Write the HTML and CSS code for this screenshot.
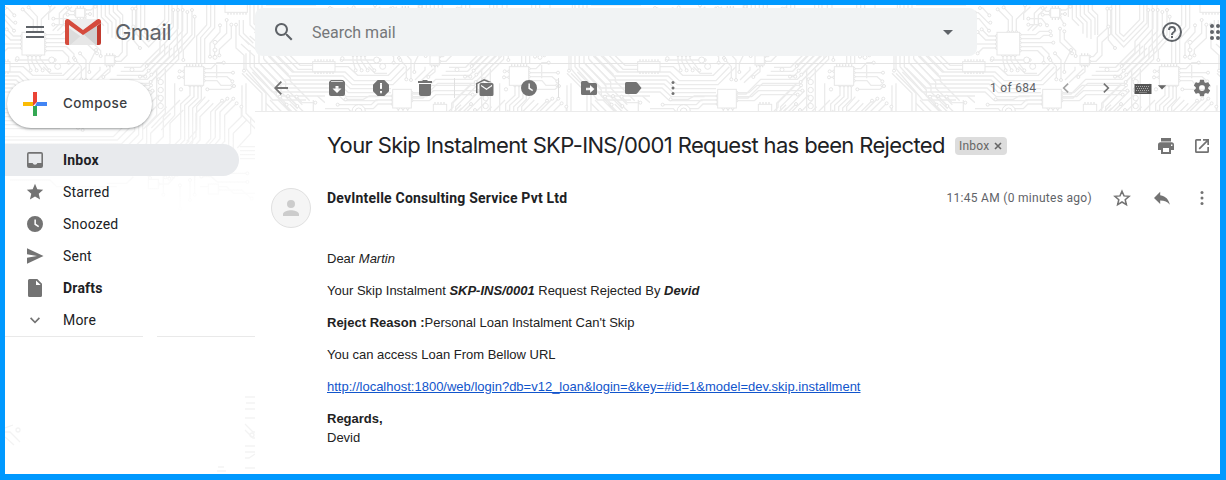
FILE: index.html
```html
<!DOCTYPE html>
<html lang="en">
<head>
<meta charset="utf-8">
<title>Gmail</title>
<link rel="stylesheet" href="styles.css">
</head>
<body>
<svg class="defs" aria-hidden="true">
  <symbol id="i-menu" viewBox="0 0 24 24"><path d="M3 6h18v2H3zM3 11h18v2H3zM3 16h18v2H3z"/></symbol>
  <symbol id="i-search" viewBox="0 0 24 24"><path d="M15.5 14h-.8l-.3-.3A6.5 6.5 0 1 0 13.7 14.4l.3.3v.8l5 5 1.5-1.5zm-6 0a4.500 4.500 0 1 1 0-9 4.500 4.500 0 0 1 0 9z"/></symbol>
  <symbol id="i-drop" viewBox="0 0 24 24"><path d="M7 10l5 5 5-5z"/></symbol>
  <symbol id="i-help" viewBox="0 0 24 24"><path d="M11 18h2v-2h-2zM12 2a10 10 0 1 0 0 20 10 10 0 0 0 0-20zm0 18a8 8 0 1 1 0-16 8 8 0 0 1 0 16zm0-14a4 4 0 0 0-4 4h2a2 2 0 1 1 4 0c0 2-3 1.750-3 5h2c0-2.250 3-2.500 3-5a4 4 0 0 0-4-4z"/></symbol>
  <symbol id="i-apps" viewBox="0 0 24 24"><g><circle cx="6" cy="6" r="2"/><circle cx="12" cy="6" r="2"/><circle cx="18" cy="6" r="2"/><circle cx="6" cy="12" r="2"/><circle cx="12" cy="12" r="2"/><circle cx="18" cy="12" r="2"/><circle cx="6" cy="18" r="2"/><circle cx="12" cy="18" r="2"/><circle cx="18" cy="18" r="2"/></g></symbol>
  <symbol id="i-back" viewBox="0 0 20 20"><path d="M17 9.100H6.300l4.700-4.800L9.700 3 3 10l6.700 7 1.300-1.300-4.700-4.800H17z"/></symbol>
  <symbol id="i-archive" viewBox="0 0 20 20"><path fill-rule="evenodd" d="M4 2h12l2 2v12a2 2 0 0 1-2 2H4a2 2 0 0 1-2-2V4zM4.300 3.300L3.800 4h12.400l-.5-.7zM8.500 8v2.500h-3L10 15l4.500-4.500h-3V8z"/></symbol>
  <symbol id="i-spam" viewBox="0 0 20 20"><path fill-rule="evenodd" d="M6.700 2h6.600L18 6.700v6.600L13.300 18H6.700L2 13.300V6.700zM9 5v6h2V5zM9 13v2.200h2V13z"/></symbol>
  <symbol id="i-trash" viewBox="0 0 20 20"><path d="M4 6h12v10a2 2 0 0 1-2 2H6a2 2 0 0 1-2-2zM3 3h4l1-1h4l1 1h4v2H3z"/></symbol>
  <symbol id="i-unread" viewBox="0 0 20 20"><path fill-rule="evenodd" d="M6 5h11a1.500 1.500 0 0 1 1.500 1.500v10A1.500 1.500 0 0 1 17 18H6a1.500 1.500 0 0 1-1.500-1.500v-10A1.500 1.500 0 0 1 6 5zm0 1.800v1.500l5.500 3.700L17 8.300V6.800l-5.500 3.700z"/><path d="M1 15V5.200L9 1l8 3.300h-4L9 2.700 2.500 6v9z"/></symbol>
  <symbol id="i-clock" viewBox="0 0 20 20"><path fill-rule="evenodd" d="M10 2a8 8 0 1 0 0 16 8 8 0 0 0 0-16zM9.400 5.500h1.500v4.300l3.200 2.100-.8 1.300-3.900-2.500z"/></symbol>
  <symbol id="i-move" viewBox="0 0 20 20"><path fill-rule="evenodd" d="M3.500 3H8l2 2h6.500A1.500 1.500 0 0 1 18 6.500v9a1.500 1.500 0 0 1-1.500 1.500h-13A1.500 1.500 0 0 1 2 15.500v-11A1.500 1.500 0 0 1 3.500 3zM11 7v2.800H7v2.500h4V15l4.500-4z"/></symbol>
  <symbol id="i-label" viewBox="0 0 20 20"><path d="M3.500 4h9.300c.6 0 1.200.3 1.500.8L18.500 10l-4.200 5.200c-.3.500-.9.800-1.500.8H3.500A1.500 1.500 0 0 1 2 14.500v-9A1.500 1.500 0 0 1 3.500 4z"/></symbol>
  <symbol id="i-more" viewBox="0 0 20 20"><circle cx="10" cy="4.500" r="1.500"/><circle cx="10" cy="10" r="1.500"/><circle cx="10" cy="15.500" r="1.500"/></symbol>
  <symbol id="i-left" viewBox="0 0 20 20"><path d="M12.700 6.200L8.800 10l3.900 3.800-1.100 1.200-5.100-5 5.100-5z"/></symbol>
  <symbol id="i-right" viewBox="0 0 20 20"><path d="M7.300 6.200l3.900 3.800-3.900 3.800L8.400 15l5.100-5-5.100-5z"/></symbol>
  <symbol id="i-keys" viewBox="0 0 18 12"><path d="M.5 1h17v10H.5z"/><path stroke="#aaa" stroke-dasharray="1 1" d="M2 3.500h14M3 5.500h12M2 7.500h14"/><path stroke="#aaa" d="M5 9.400h8" stroke-width=".6"/></symbol>
  <symbol id="i-gear" viewBox="0 0 24 24"><path d="M19.430 12.980c.04-.32.070-.64.070-.98s-.03-.66-.07-.98l2.110-1.650c.19-.15.240-.42.120-.64l-2-3.460c-.12-.22-.39-.3-.61-.22l-2.490 1c-.52-.4-1.080-.73-1.690-.98l-.38-2.650A.49.490 0 0 0 14 2h-4c-.25 0-.46.180-.49.420l-.38 2.650c-.61.250-1.170.590-1.690.980l-2.490-1c-.23-.09-.49 0-.61.220l-2 3.460c-.13.220-.07.490.120.640l2.110 1.650c-.04.320-.07.650-.07.980s.03.660.070.980l-2.110 1.650c-.19.150-.24.420-.12.640l2 3.460c.12.220.390.300.610.220l2.490-1c.52.400 1.080.730 1.690.980l.38 2.650c.03.240.240.420.490.420h4c.25 0 .46-.18.490-.42l.38-2.650c.61-.25 1.170-.59 1.690-.98l2.490 1c.23.090.490 0 .610-.22l2-3.460c.12-.22.070-.49-.12-.64zM12 15.500a3.500 3.500 0 1 1 0-7 3.500 3.500 0 0 1 0 7z"/></symbol>
  <symbol id="i-inbox" viewBox="0 0 20 20"><path fill-rule="evenodd" d="M4 2h12a2 2 0 0 1 2 2v12a2 2 0 0 1-2 2H4a2 2 0 0 1-2-2V4a2 2 0 0 1 2-2zm-.4 1.700v9.300h4a2.500 2.500 0 0 0 4.800 0h4V3.700z"/></symbol>
  <symbol id="i-star" viewBox="0 0 20 20"><path d="M10 1.800l2.300 5.500 5.900.5-4.500 3.900 1.400 5.800-5.100-3.100-5.100 3.100 1.400-5.800-4.500-3.900 5.900-.5z"/></symbol>
  <symbol id="i-send" viewBox="0 0 20 20"><path d="M2 2.200L18.500 10 2 17.800v-6L12 10 2 8.200z"/></symbol>
  <symbol id="i-file" viewBox="0 0 20 20"><path fill-rule="evenodd" d="M4.500 1h7.800L17 5.700v11.800a1.500 1.500 0 0 1-1.500 1.500h-11A1.500 1.500 0 0 1 3 17.500v-15A1.500 1.500 0 0 1 4.500 1zM11 2.500V7h4.700z"/></symbol>
  <symbol id="i-down" viewBox="0 0 20 20"><path d="M6.200 7.300l3.800 3.900 3.800-3.900L15 8.400l-5 5.100-5-5.100z"/></symbol>
  <symbol id="i-print" viewBox="0 0 20 20"><path fill-rule="evenodd" d="M5 2h10v3.500H5zM4.500 6.300h11A2.500 2.500 0 0 1 18 8.800V14h-3v4H5v-4H2V8.800a2.500 2.500 0 0 1 2.500-2.500zM7 12v4h6v-4zm8-3.500v1.400h1.400V8.500z"/></symbol>
  <symbol id="i-open" viewBox="0 0 20 20"><path d="M15.300 15.300H4.700V4.700H9V3H4.500A1.500 1.500 0 0 0 3 4.500v11A1.500 1.500 0 0 0 4.500 17h11a1.500 1.500 0 0 0 1.500-1.500V11h-1.700zM11 3v1.700h3.100l-7.500 7.500 1.200 1.200 7.500-7.500V9H17V3z"/></symbol>
  <symbol id="i-staro" viewBox="0 0 20 20"><path fill="none" stroke="currentColor" stroke-width="1.500" d="M10 3.200l2 4.700 5.100.4-3.900 3.400 1.200 5-4.400-2.700-4.400 2.700 1.200-5-3.900-3.400 5.100-.4z"/></symbol>
  <symbol id="i-reply" viewBox="0 0 20 20"><path d="M8.200 7.200V3.800L2 10l6.200 6v-3.600c4.400 0 7.400 1.300 9.600 4.300-.9-4.400-3.600-8.800-9.600-9.500z"/></symbol>
  <symbol id="i-person" viewBox="0 0 16 16"><path d="M8 8a4 4 0 1 0 0-8 4 4 0 0 0 0 8zm0 2.200c-2.800 0-8 1.300-8 4V16h16v-1.800c0-2.700-5.200-4-8-4z"/></symbol>
</svg>

<div class="frame">
  <!-- circuit board theme, drawn on a 3x grid -->
  <svg class="theme" width="1226" height="474" aria-hidden="true">
    <defs>
      <marker id="pad" viewBox="0 0 14 14" refX="7" refY="7" markerWidth="14" markerHeight="14" markerUnits="userSpaceOnUse"><circle class="pad" cx="7" cy="7" r="4.500"/></marker>
      <pattern id="board" width="975" height="780" patternUnits="userSpaceOnUse" patternTransform="scale(.33333)">
        <g class="trace">
          <path d="M410 15v88l36 38 70-72V15M422 15v86l24 24 60-62V15M434 15v84l12 10 48-50V15"/>
          <path d="M735 120l42 36v32l66 70v18l50 50M723 132l40 36v32l66 70v18l50 50M749 108l42 36v32l66 70v18l50 50M763 96l42 36v32l66 70v10l58 58"/>
          <path d="M805 168l60 60h110M817 156l60 60h98M793 180l60 60h122M781 192l60 60h134M769 204l60 60h146M757 216l60 60h158"/>
          <path d="M0 216h60l28 26h110l40-42M0 228h54l28 26h122l54-54M0 240h48l28 26h122M0 252h42l28 26h128M0 264h36l28 26h100M0 276h30l28 26h100"/>
          <path d="M258 282h30l44-44h110l90-88V15M258 294h36l44-44h110l98-98V15"/>
          <path d="M440 250l-60 60v60l-40 40H0M452 260l-60 60v60l-40 40H0M464 272l-60 60v60l-40 40H0M476 284l-60 60v60l-40 40H0M488 300l-60 60v56l-50 52M500 320l-60 60v50l-40 40M512 340l-60 60v48l-40 40"/>
          <path d="M470 206v140l-40 42M496 206v134l-42 44M524 250v96l-40 44"/>
          <path d="M620 15v60l-30 34v80M632 15v64l-30 34v76M644 15v68l-30 34v72M750 15v60l30 30M762 15v56l30 30M774 15v52l30 30M786 15v48l30 30M798 15h150"/>
          <path d="M0 350h200M0 362h200M0 374h190M0 386h180M975 340h-60l-40-40M975 352h-66l-40-40M720 440h80M720 452h80M720 464h80M720 476h80M0 440h340l30 30M0 455h330l30 30M600 560h80l20 20h80M30 540h120l20 20h180M320 550h60l20-20"/>
          <path d="M738 220l60 60v60l50 50M726 220l60 60v64l50 50M738 250v90l40 40M726 256v90l40 40"/>
          <path d="M786 120v24l80 80M798 108v24l84 84M810 108v16l84 84h81M822 120l78 76h38M750 150v50l80 88h145M738 160v46l80 94h100"/>
          <path d="M810 300l50 50v60M798 310l50 50v60M834 300l40 40v80M850 312l36 36v70M940 300v40l35 35M952 288l23 20"/>
          <path d="M30 200h40l28 26h92l36-36M130 200l20 20h36M270 240l30-30v-10M282 248l44-42M350 226h84l82-82M362 214h66l76-76M372 202h50l70-70"/>
          <path d="M360 346l24-24v-14l54-54M372 350l36-36M270 350h60M280 362h70M290 374h70l50-50M0 326h70l20 24M0 338h60"/>
          <path d="M280 15v36M292 15v42l20 20M304 15v36l20 20v30M316 15v32l20 20v46M328 15v26l20 20v56M340 15v20l20 20v50M352 15v14l16 16v60"/>
          <path d="M146 60v-20l20-20M158 92l20-20V40l20-20M172 92l18-18V46l26-26M650 195v40M730 60v40l30 30M718 60v44l30 30M640 310l-40 40v70l-40 44M628 300l-40 40v70l-30 34M616 290l-26 30v70l-30 34"/>
          <path d="M540 300l-50 50v60l-40 40M550 330l-40 40v60l-40 40M740 360l-40 40v60M752 350v50l-40 44"/>
        </g>
        <g class="trace ends">
          <path d="M15 24h8l20 22"/><path d="M0 38h10l30 30h6"/><path d="M0 56h12l30 36"/><path d="M100 97V60l-32-32"/><path d="M112 97V50L86 22"/><path d="M124 97V58l26-26V16"/>
          <path d="M134 104h48l12-10h32"/><path d="M134 116h60l12-10h22"/><path d="M134 128h101"/><path d="M134 140h66l22 22v12"/><path d="M134 152h54l18 18v18"/>
          <path d="M66 108H40L20 88"/><path d="M66 120H32L8 96"/><path d="M66 132H0"/><path d="M66 144H24l-16 16"/>
          <path d="M84 165v18l8 28"/><path d="M96 165v20l14 26"/><path d="M108 165v16l20 30"/><path d="M120 165v10l28 36"/><path d="M50 180H164"/>
          <path d="M254 30h18l14-10"/><path d="M254 42h16"/><path d="M254 50l14 24"/><path d="M227 34h-14l-10-10"/><path d="M227 44h-24"/>
          <path d="M255 86v40l36 34"/><path d="M268 94v24l34 34v16"/><path d="M288 150l-20 40v26"/><path d="M240 160l18 20v60"/><path d="M226 180l18 20v38"/>
          <path d="M343 170h12l12-14V112l30-28V26"/><path d="M343 184h20l18-18v-40l26-24V26"/><path d="M330 195v20l-20 16"/>
          <path d="M520 30v50l-40 44v34l-40 40"/><path d="M534 30v56l-40 44v34l-48 48"/><path d="M548 30v62l-40 44v34l-54 54"/><path d="M562 36v62l-40 44v34l-70 70"/><path d="M576 30v74l-40 44v30l-60 60"/><path d="M584 50v60l-34 40v30"/>
          <path d="M611 206h22l18-18h20"/><path d="M611 218h88"/><path d="M611 230h70l16 14"/><path d="M611 242h40l12 14h34"/><path d="M622 268h68l12-10"/><path d="M553 214h-14"/><path d="M553 232h-16"/>
          <path d="M570 256v30l-28 26v104l-46 46v70"/><path d="M582 256v34l-28 26v104l-46 46v70"/><path d="M594 256v38l-28 26v104l-46 46v60"/><path d="M604 256v42l-26 26v104l-46 46v50"/>
          <path d="M700 296l-40 40v80l-40 46v50"/><path d="M682 296l-36 36v80l-40 46v40"/><path d="M666 302l-34 34v80l-40 46v30"/><path d="M710 310l-36 36v78l-38 40v44"/><path d="M724 320v30l-38 38v48l-40 40"/>
          <path d="M680 60v40l-36 34v36"/><path d="M694 74v40l-36 34v18"/><path d="M708 74v70l24 22v46"/><path d="M660 76v20l-30 34v40"/>
          <path d="M259 278h38l24-22h132"/><path d="M259 290h46l20-18h132"/><path d="M259 302h54l20-18h110"/><path d="M203 300h-50l-14 14H38"/><path d="M203 312h-44l-14 14H92"/><path d="M203 288h-70l-18 10H62"/>
          <path d="M220 324v48"/><path d="M234 324v60"/><path d="M248 324v66"/><path d="M438 312l-44 44"/><path d="M450 330l-40 40"/>
          <path d="M840 290l20 24"/><path d="M864 288l28 30"/><path d="M890 290l16 18h40"/><path d="M400 80v40l20 24"/><path d="M420 230h16"/><path d="M160 56h40l16 20"/><path d="M160 74h36"/>
          <path d="M400 500h70l20 24v60"/><path d="M370 512h60l20 22"/><path d="M475 552h30l26-30"/><path d="M600 500h60l22 20h60"/><path d="M604 530h30l18 16h90"/><path d="M570 540v60"/><path d="M584 524v60"/><path d="M540 556v70"/><path d="M655 570h70l30 26"/>
        </g>
        <g class="chip"><rect x="66" y="97" width="68" height="68"/><rect x="227" y="25" width="27" height="27"/><rect x="315" y="167" width="28" height="28"/><rect x="553" y="200" width="58" height="56"/><rect x="675" y="0" width="67" height="37"/><rect x="-37" y="185" width="67" height="30"/><rect x="938" y="185" width="67" height="30"/><rect x="203" y="268" width="56" height="56"/><rect x="325" y="313" width="40" height="35"/><rect x="445" y="538" width="30" height="28"/><rect x="625" y="552" width="30" height="30"/></g>
        <g class="pins"><path d="M230 21h24M230 57h24M318 163h24M318 199h24M682 41h58M-32 181h60M943 181h30M-32 219h60M943 219h30M328 309h34M558 196h50"/></g>
        <g class="via"><circle cx="155" cy="180" r="9"/><circle cx="173" cy="199" r="9"/><circle cx="482" cy="246" r="8"/><circle cx="482" cy="270" r="8"/><circle cx="482" cy="294" r="8"/><circle cx="482" cy="318" r="8"/><circle cx="645" cy="127" r="6"/><circle cx="645" cy="150" r="6"/><circle cx="645" cy="172" r="6"/><circle cx="101" cy="334" r="20"/><circle cx="101" cy="334" r="10"/><circle cx="52" cy="175" r="5"/><circle cx="396" cy="209" r="6"/><circle cx="543" cy="268" r="5"/></g>
      </pattern>
      <linearGradient id="fade" x1="0" y1="0" x2="0" y2="1"><stop offset="0" stop-color="#fff" stop-opacity="0"/><stop offset=".75" stop-color="#fff" stop-opacity=".82"/><stop offset="1" stop-color="#fff"/></linearGradient>
    </defs>
    <rect width="1226" height="215" fill="url(#board)"/>
    <rect y="95" width="255" height="121" fill="url(#fade)"/>
    <g class="trace faint"><path d="M5 432h5l10 10M5 437l9 8M5 428l8-3M245 397h10M246 403h9M245 409h10M245 418h10M245 424l8 8h2M245 430l8 8h2M245 446h10M245 452h10M245 458h4l6-4M245 468h10M218 467h6M217 471h9"/><circle cx="18" cy="430" r="2"/><circle cx="252" cy="435" r="2"/></g>
  </svg>

  <header class="top">
    <svg class="ic24 menu"><use href="#i-menu"/></svg>
    <svg class="logo" viewBox="0 0 36 26"><path fill="#eee" d="M2 0h32v26H2z"/><path fill="#dcdcdc" d="M4 9l14 10-12 7H4z"/><path fill="#d0d0d0" d="M32 6v20h-2L18 15z"/><path fill="#e7e7e7" d="M18 15l13 11H5z"/><path fill="#d54b3d" d="M0 2.500A2.500 2.500 0 0 1 2.500 0L4 .5 18 11 32 .5 33.500 0A2.500 2.500 0 0 1 36 2.500V4L18 16 4 6v20H2a2 2 0 0 1-2-2z"/><path fill="#c13a2e" d="M32 6.900L36 4v20a2 2 0 0 1-2 2h-2z"/></svg>
    <span class="brand">Gmail</span>
    <div class="search"><svg class="ic24"><use href="#i-search"/></svg><span class="query">Search mail</span><svg class="ic24"><use href="#i-drop"/></svg></div>
    <svg class="ic24 help"><use href="#i-help"/></svg>
    <svg class="ic24 apps"><use href="#i-apps"/></svg>
  </header>

  <div class="columns">
    <nav class="side">
      <div class="compose"><svg width="24" height="24" viewBox="0 0 24 24"><path fill="#ea4335" d="M10 0h4v10l-4 4z"/><path fill="#4285f4" d="M14 10h10v4H12z"/><path fill="#34a853" d="M10 14h4v10h-4z"/><path fill="#fbbc04" d="M0 10h10v4H0z"/></svg><span>Compose</span></div>
      <ul class="folders">
        <li class="active"><svg class="ic"><use href="#i-inbox"/></svg>Inbox</li>
        <li><svg class="ic"><use href="#i-star"/></svg>Starred</li>
        <li><svg class="ic"><use href="#i-clock"/></svg>Snoozed</li>
        <li><svg class="ic"><use href="#i-send"/></svg>Sent</li>
        <li class="strong"><svg class="ic"><use href="#i-file"/></svg>Drafts</li>
        <li><svg class="ic"><use href="#i-down"/></svg>More</li>
      </ul>
      <div class="rules"><i></i><i></i></div>
    </nav>
    <main class="main">
      <div class="tools">
        <svg class="ic back"><use href="#i-back"/></svg>
        <div class="group"><svg class="ic"><use href="#i-archive"/></svg><svg class="ic"><use href="#i-spam"/></svg><svg class="ic"><use href="#i-trash"/></svg></div>
        <i class="sep"></i>
        <div class="group"><svg class="ic"><use href="#i-unread"/></svg><svg class="ic"><use href="#i-clock"/></svg></div>
        <i class="sep"></i>
        <div class="group"><svg class="ic"><use href="#i-move"/></svg><svg class="ic"><use href="#i-label"/></svg></div>
        <svg class="ic more"><use href="#i-more"/></svg>
        <span class="count">1 of 684</span>
        <svg class="ic prev"><use href="#i-left"/></svg>
        <svg class="ic next"><use href="#i-right"/></svg>
        <svg class="keys"><use href="#i-keys"/></svg>
        <svg class="caret"><use href="#i-drop"/></svg>
        <svg class="ic gear"><use href="#i-gear"/></svg>
      </div>
      <article class="mail">
        <div class="subject">
          <h1>Your Skip Instalment SKP-INS/0001 Request has been Rejected</h1>
          <span class="tag">Inbox <svg width="8" height="8" viewBox="0 0 8 8"><path d="M1 1l6 6M7 1L1 7"/></svg></span>
          <div class="actions"><svg class="ic"><use href="#i-print"/></svg><svg class="ic"><use href="#i-open"/></svg></div>
        </div>
        <div class="sender">
          <div class="avatar"><svg width="16" height="16"><use href="#i-person"/></svg></div>
          <b class="from">DevIntelle Consulting Service Pvt Ltd</b>
          <span class="time">11:45 AM (0 minutes ago)</span>
          <div class="actions"><svg class="ic"><use href="#i-staro"/></svg><svg class="ic"><use href="#i-reply"/></svg><svg class="ic"><use href="#i-more"/></svg></div>
        </div>
        <div class="body">
          <p>Dear <i>Martin</i></p>
          <p>Your Skip Instalment <b><i>SKP-INS/0001</i></b> Request Rejected By <b><i>Devid</i></b></p>
          <p><b>Reject Reason :</b>Personal Loan Instalment Can't Skip</p>
          <p>You can access Loan From Bellow URL</p>
          <p><a href="#">http://localhost:1800/web/login?db=v12_loan&amp;login=&amp;key=#id=1&amp;model=dev.skip.installment</a></p>
          <p><b>Regards,</b><br>Devid</p>
        </div>
      </article>
    </main>
  </div>
</div>
</body>
</html>
```
FILE: styles.css
```css
* { box-sizing: border-box; }
body { margin: 0; background: #fff; font-family: Roboto, sans-serif; color: #202124; }
.defs { position: absolute; width: 0; height: 0; }
.frame { position: relative; width: 1226px; height: 480px; overflow: hidden; border: solid #09f; border-width: 5px 6px 6px 5px; display: flex; flex-direction: column; background: #fff; }
.theme { position: absolute; top: -5px; left: -5px; }
.trace { fill: none; stroke: #ebebeb; stroke-width: 4; }
.ends path { marker-start: url(#pad); marker-end: url(#pad); }
.pad { fill: #fff; stroke: #e4e4e4; stroke-width: 3; }
.chip rect { fill: #fff; stroke: #e7e7e7; stroke-width: 3; }
.pins path { stroke: #e6e6e6; stroke-width: 6; stroke-dasharray: 4 5; }
.via circle { fill: #fff; stroke: #e6e6e6; stroke-width: 3; }
.faint { stroke: #f3f3f3; stroke-width: 1.3; }

svg { display: block; flex: none; }
.ic24 { width: 24px; height: 24px; fill: #5f6368; }
.ic { width: 20px; height: 20px; fill: #737373; color: #737373; }

.top { position: relative; height: 59px; flex: none; display: flex; align-items: center; padding-bottom: 4px; border-bottom: 1px solid #e4e4e4; }
.menu { margin-left: 18px; }
.logo { width: 36px; height: 26px; margin-left: 18px; }
.brand { flex: none; width: 139px; margin-left: 14px; font: 22px/30px Inter, sans-serif; letter-spacing: -.55px; color: #5f6368; }
.search { flex: none; width: 722px; height: 48px; margin-left: 1px; padding: 0 17px; display: flex; align-items: center; background: #f1f3f4; border-radius: 8px; }
.query { flex: 1; margin-left: 16px; padding-top: 1px; font: 16px/24px Roboto, sans-serif; color: #757779; }
.help { margin-left: 183px; }
.apps { margin-left: 22px; }

.columns { position: relative; display: flex; flex: 1; min-height: 0; }
.side { width: 250px; flex: none; padding-top: 16px; }
.compose { width: 145px; height: 48px; margin-left: 2px; padding-left: 16px; display: flex; align-items: center; gap: 16px; border-radius: 24px; background: #fff; box-shadow: 0 1px 2px rgba(60,64,67,.35), 0 1px 3px 1px rgba(60,64,67,.15); font: 500 13.500px/20px Inter, sans-serif; letter-spacing: .4px; color: #3c4043; }
.compose span { margin-top: -2px; }
.folders { list-style: none; margin: 16px 0 0; padding: 0; }
.folders li { height: 32px; width: 234px; padding-left: 20px; display: flex; align-items: center; gap: 18px; font-size: 14px; letter-spacing: .2px; }
.folders .active { background: #e8eaed; border-radius: 0 16px 16px 0; font-weight: 700; }
.folders .strong { font-weight: 700; }
.rules { display: grid; grid-template-columns: 138px 98px; gap: 14px; }
.rules i { height: 1px; background: #e9e9e9; }

.main { flex: 1; display: flex; flex-direction: column; }
.tools { height: 48px; flex: none; padding-left: 16px; display: flex; align-items: center; border-bottom: 1px solid #ebebeb; }
.group { display: flex; gap: 24px; }
.back { margin-right: 36px; }
.sep { width: 1px; height: 20px; margin: 0 20px 0 19px; background: #e0e0e0; }
.more { margin-left: 20px; }
.count { width: 47px; margin-left: 307px; font-size: 12px; letter-spacing: .3px; color: #5f6368; white-space: nowrap; }
.prev { margin-left: 19px; opacity: .65; }
.next { margin-left: 20px; }
.keys { width: 18px; height: 12px; margin: 2px 0 0 18px; fill: #555; }
.caret { width: 20px; height: 20px; margin: -2px 0 0; fill: #666; }
.gear { margin-left: 20px; }

.mail { flex: 1; background: #fff; padding: 18px 8px 0 72px; }
.subject { height: 32px; display: flex; align-items: center; }
h1 { width: 618px; margin: -3px 0 0; font: 400 22px/28px Inter, sans-serif; letter-spacing: -.64px; white-space: nowrap; }
.tag { width: 52px; height: 18px; margin-left: 10px; padding-left: 4px; display: flex; align-items: center; gap: 5px; border-radius: 4px; background: #ddd; font-size: 12px; letter-spacing: .2px; color: #666; }
.tag path { stroke: #666; stroke-width: 1.600; }
.actions { display: flex; margin-left: auto; }
.subject .actions { gap: 16px; }
.sender { height: 40px; margin: 26px 0 0 -56px; display: flex; }
.avatar { width: 40px; height: 40px; display: grid; place-items: center; border: 1px solid #e0e0e0; border-radius: 50%; background: #f5f5f5; fill: #ccc; }
.from { margin: 0 0 0 16px; font-size: 14px; line-height: 20px; letter-spacing: .2px; }
.time { margin-left: auto; font-size: 12px; line-height: 20px; letter-spacing: .3px; color: #5f6368; }
.sender .actions { gap: 20px; margin-left: 20px; }
.body { margin-top: 21px; font: 13px/19px "Liberation Sans", Arial, sans-serif; color: #222; }
.body p { margin: 0 0 13px; }
.body a { color: #15c; }
```
